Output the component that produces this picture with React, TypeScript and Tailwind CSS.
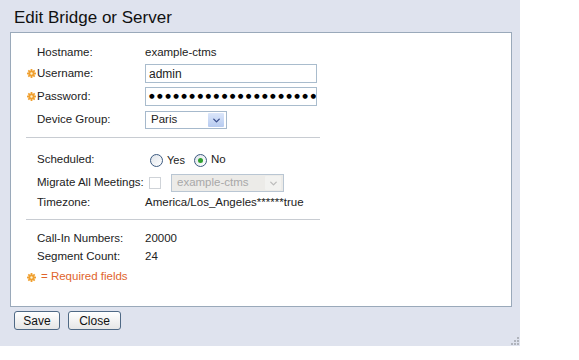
import { ChevronDown } from "lucide-react";

const font = { fontFamily: '"Liberation Sans", Arial, sans-serif' };

const Req = () => (
  <svg width="9" height="9" viewBox="0 0 10 10" className="shrink-0">
    <g fill="#f0a030">
      <circle cx="5" cy="5" r="3.4" />
      <rect x="4" y="0" width="2" height="10" />
      <rect x="0" y="4" width="10" height="2" />
      <rect x="4" y="0" width="2" height="10" transform="rotate(45 5 5)" />
      <rect x="4" y="0" width="2" height="10" transform="rotate(-45 5 5)" />
    </g>
    <circle cx="5" cy="5" r="1.3" fill="#fff3d0" />
  </svg>
);

const Row = ({
  label,
  required,
  className,
  children,
}: {
  label: string;
  required?: boolean;
  className?: string;
  children: React.ReactNode;
}) => (
  <div className={`flex items-center ${className ?? ""}`}>
    <div className="flex w-[11px] items-center pl-[1px]">{required && <Req />}</div>
    <div className="w-[108px] whitespace-nowrap">{label}</div>
    <div className="flex items-center">{children}</div>
  </div>
);

const FakeSelect = ({
  value,
  width,
  disabled,
}: {
  value: string;
  width: string;
  disabled?: boolean;
}) => (
  <div
    className={`flex h-[18px] items-center justify-between border pl-[5px] pr-[2px] ${width} ${
      disabled
        ? "border-[#b9c6d3] bg-[#ecebe8] text-[#a8a8a8]"
        : "border-[#a6b9cc] bg-white text-[#222]"
    }`}
  >
    <span>{value}</span>
    <span
      className={`flex h-[14px] w-[16px] items-center justify-center rounded-[1px] ${
        disabled ? "bg-[#f2f2f0] text-[#bcbcbc]" : "bg-gradient-to-b from-[#dbe6fa] to-[#b7cbf0] text-[#3a4e8c]"
      }`}
    >
      <ChevronDown size={11} strokeWidth={3} />
    </span>
  </div>
);

const Radio = ({ checked }: { checked?: boolean }) => (
  <span className="flex h-[13px] w-[13px] items-center justify-center rounded-full border border-[#3c5a80] bg-gradient-to-br from-[#dfe4ea] to-white">
    {checked && <span className="h-[5px] w-[5px] rounded-full bg-[#2fa02f]" />}
  </span>
);

export default function App() {
  return (
    <div className="h-[360px] w-[579px] bg-white text-[11.5px] text-[#222]" style={font}>
      <div className="relative h-[346px] w-[520px] bg-[#dfe3ee] pt-[8px]">
        <div className="pl-[14px] text-[17px] leading-[20px] text-[#111]">Edit Bridge or Server</div>
        <div className="ml-[10px] mt-[4px] h-[275px] w-[502px] border border-[#9aa9ba] bg-white pl-[15px] pt-[11px]">
          <Row label="Hostname:" className="h-[18px]">
            <span>example-ctms</span>
          </Row>
          <Row label="Username:" required className="mt-[2px] h-[19px]">
            <input
              readOnly
              value="admin"
              className="h-[19px] w-[172px] border border-[#a9bccd] px-[3px] text-[12px] outline-none"
            />
          </Row>
          <Row label="Password:" required className="mt-[4px] h-[19px]">
            <div
              className="flex h-[19px] w-[172px] items-center overflow-hidden whitespace-nowrap border border-[#a9bccd] pl-[3px] text-[6.5px] tracking-[2.4px] text-black"
              style={{ fontFamily: '"DejaVu Sans", sans-serif' }}
            >
              {"●".repeat(26)}
            </div>
          </Row>
          <Row label="Device Group:" className="mt-[5px] h-[18px]">
            <FakeSelect value="Paris" width="w-[82px]" />
          </Row>
          <div className="mt-[8px] h-px w-[294px] bg-[#c8ccd2]" />
          <Row label="Scheduled:" className="mt-[13px] h-[18px]">
            <span className="ml-[5px] flex items-center gap-[4px]">
              <Radio />
              <span className="text-[11px]">Yes</span>
            </span>
            <span className="ml-[9px] flex items-center gap-[4px]">
              <Radio checked />
              <span>No</span>
            </span>
          </Row>
          <Row label="Migrate All Meetings:" className="mt-[5px] h-[18px]">
            <span className="ml-[4px] h-[12px] w-[12px] border border-[#cfd3d8] bg-white" />
            <span className="ml-[10px]">
              <FakeSelect value="example-ctms" width="w-[113px]" disabled />
            </span>
          </Row>
          <Row label="Timezone:" className="mt-[2px] h-[18px]">
            <span>America/Los_Angeles******true</span>
          </Row>
          <div className="mt-[7px] h-px w-[294px] bg-[#c8ccd2]" />
          <Row label="Call-In Numbers:" className="mt-[10px] h-[18px]">
            <span>20000</span>
          </Row>
          <Row label="Segment Count:" className="h-[18px]">
            <span>24</span>
          </Row>
          <div className="mt-[2px] flex h-[18px] items-center gap-[5px] pl-[1px] text-[#e0642c]">
            <Req />
            <span>= Required fields</span>
          </div>
        </div>
        <div className="ml-[14px] mt-[4px] flex gap-[8px]">
          <button className="h-[19px] w-[46px] rounded-[3px] border border-[#4f6985] bg-gradient-to-b from-white to-[#e6e6e6] text-[12px] leading-none text-[#111]">
            Save
          </button>
          <button className="h-[19px] w-[53px] rounded-[3px] border border-[#4f6985] bg-gradient-to-b from-white to-[#e6e6e6] text-[12px] leading-none text-[#111]">
            Close
          </button>
        </div>
        <svg width="10" height="10" className="absolute bottom-0 right-0" viewBox="0 0 10 10">
          <g fill="#b0b4bc">
            <rect x="7" y="1" width="2" height="2" />
            <rect x="4" y="4" width="2" height="2" />
            <rect x="7" y="4" width="2" height="2" />
            <rect x="1" y="7" width="2" height="2" />
            <rect x="4" y="7" width="2" height="2" />
            <rect x="7" y="7" width="2" height="2" />
          </g>
        </svg>
      </div>
    </div>
  );
}
